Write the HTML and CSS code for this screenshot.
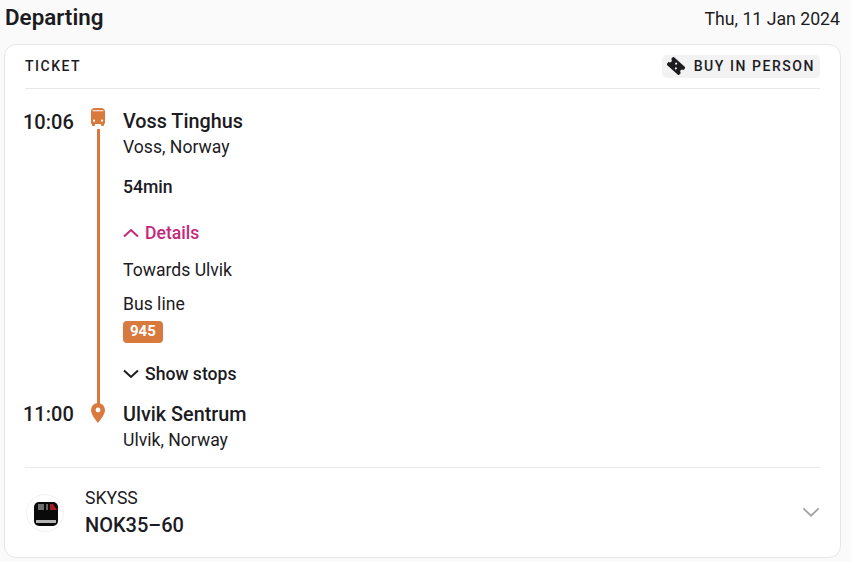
FILE: index.html
```html
<!DOCTYPE html>
<html lang="en">
<head>
    <meta charset="UTF-8">
    <meta name="viewport" content="width=device-width, initial-scale=1.0">
    <title>Departing</title>
    <link rel="stylesheet" href="styles.css">
</head>
<body>

    <div class="top-row">
        <h1>Departing</h1>
        <span class="date">Thu, 11 Jan 2024</span>
    </div>

    <div class="card">
        <!-- Ticket header -->
        <div class="ticket-row">
            <span class="ticket-label">TICKET</span>
            <span class="buy-chip">
                <svg class="ticket-icon" viewBox="0 0 24 24"><g transform="rotate(42 12 12)"><path d="M1 5h22v4.500a2.500 2.500 0 0 0 0 5V19H1v-4.500a2.500 2.500 0 0 0 0-5z"/><circle cx="10" cy="9.500" r="1.400" fill="#f2f2f2"/><circle cx="14" cy="14.500" r="1.400" fill="#f2f2f2"/></g></svg>
                BUY IN PERSON
            </span>
        </div>

        <!-- Journey leg -->
        <div class="leg">
            <div class="times">
                <span>10:06</span>
                <span>11:00</span>
            </div>
            <div class="rail">
                <svg class="bus-icon" viewBox="0 0 14 18"><path d="M4 0h6c2.500 0 4 1.200 4 3.500V15a1 1 0 0 1-1 1v1a1 1 0 0 1-1 1h-1a1 1 0 0 1-1-1v-1H4v1a1 1 0 0 1-1 1H2a1 1 0 0 1-1-1v-1a1 1 0 0 1-1-1V3.500C0 1.200 1.500 0 4 0z"/><rect x="1.500" y="2.200" width="11" height="1.100" rx="0.500" fill="#fff"/><circle cx="3" cy="12.700" r="1.100" fill="#fff"/><circle cx="11" cy="12.700" r="1.100" fill="#fff"/></svg>
                <div class="rail-line"></div>
                <svg class="pin-icon" viewBox="0 0 14 20"><path fill-rule="evenodd" d="M7 0a7 7 0 0 1 7 7c0 4.500-4 9-7 13C4 16 0 11.500 0 7a7 7 0 0 1 7-7zm0 4.600a2.400 2.400 0 1 0 0 4.800 2.400 2.400 0 0 0 0-4.800z"/></svg>
            </div>
            <div class="stops">
                <div class="stop-name">Voss Tinghus</div>
                <div class="stop-place">Voss, Norway</div>
                <div class="duration">54min</div>
                <div class="toggle details">
                    <svg class="chevron" viewBox="0 0 16 10"><path d="M1 8.500 8 2l7 6.500"/></svg>
                    Details
                </div>
                <div class="info towards">Towards Ulvik</div>
                <div class="info bus-line">Bus line</div>
                <div class="badge">945</div>
                <div class="toggle show-stops">
                    <svg class="chevron" viewBox="0 0 16 10"><path d="M1 1.500 8 8l7-6.500"/></svg>
                    Show stops
                </div>
                <div class="stop-name">Ulvik Sentrum</div>
                <div class="stop-place">Ulvik, Norway</div>
            </div>
        </div>

        <!-- Operator and price -->
        <div class="operator">
            <div class="logo-ring">
                <svg class="logo" viewBox="0 0 24 24">
                    <rect width="24" height="24" rx="5" fill="#0a0a0a"/>
                    <rect x="4" y="2" width="6" height="6" fill="#6e6e6e"/>
                    <rect x="12" y="2" width="2" height="6" fill="#666"/>
                    <path d="M16 2h3l4 6h-7z" fill="#a51c26"/>
                    <rect x="2" y="18" width="20" height="3" fill="#b5b5b5"/>
                </svg>
            </div>
            <div class="operator-text">
                <div class="operator-name">SKYSS</div>
                <div class="price">NOK35–60</div>
            </div>
            <svg class="expand" viewBox="0 0 20 12"><path d="M1.500 1.500 10 9.500l8.500-8"/></svg>
        </div>
    </div>

</body>
</html>
```

FILE: styles.css
```css
body {
    margin: 0;
    padding: 0 10px 0 4px;
    font-family: Roboto, "Liberation Sans", sans-serif;
    background-color: #fafafa;
    color: #1c1b1f;
}
.top-row {
    display: flex;
    justify-content: space-between;
    align-items: center;
    height: 35px;
    padding: 0 1px;
}
h1 {
    margin: -2px 0 0;
    font-size: 22.4px;
    font-weight: 600;
}
.date {
    font-size: 17.7px;
    padding-top: 2px;
}
.card {
    margin-top: 9px;
    padding: 0 20px;
    height: 514px;
    box-sizing: border-box;
    background-color: #fff;
    border: 1px solid #e6e6e6;
    border-radius: 12px;
}
.ticket-row {
    display: flex;
    justify-content: space-between;
    align-items: center;
    height: 43px;
    border-bottom: 1px solid #e8e8e8;
}
.ticket-label {
    font-size: 14px;
    font-weight: 500;
    letter-spacing: 1.5px;
    margin-top: -1px;
}
.buy-chip {
    display: flex;
    align-items: center;
    height: 23px;
    box-sizing: border-box;
    padding: 0 5px 2px 5px;
    gap: 9px;
    font-size: 14px;
    font-weight: 500;
    letter-spacing: 1.55px;
    background-color: #f2f2f2;
    border-radius: 5px;
}
.ticket-icon {
    width: 18px;
    height: 18px;
    fill: #1c1b1f;
}
.leg {
    display: flex;
    padding-top: 19px;
}
.times {
    width: 59px;
    margin-left: -2px;
    display: flex;
    flex-direction: column;
    justify-content: space-between;
    height: 318px;
    font-size: 20px;
    font-weight: 500;
    padding-top: 2px;
    box-sizing: border-box;
}
.rail {
    width: 32px;
    height: 315px;
    display: flex;
    flex-direction: column;
    align-items: center;
}
.bus-icon {
    width: 14px;
    height: 18px;
    fill: #d9793d;
}
.rail-line {
    flex: 1;
    width: 3px;
    margin-top: 3px;
    background-color: #d9793d;
}
.pin-icon {
    width: 14px;
    height: 20px;
    margin-top: -1px;
    fill: #d9793d;
    flex-shrink: 0;
}
.stops {
    margin-left: 9px;
}
.stop-name {
    font-size: 19.8px;
    font-weight: 500;
    line-height: 28px;
    margin-bottom: -2px;
}
.stop-place {
    font-size: 17.6px;
    line-height: 26px;
}
.duration {
    margin-top: 14px;
    font-size: 17.6px;
    font-weight: 500;
    line-height: 26px;
}
.toggle {
    display: flex;
    align-items: center;
    gap: 6px;
    font-size: 17.6px;
    font-weight: 500;
    line-height: 26px;
}
.details {
    margin-top: 20px;
    color: #c4277b;
}
.chevron {
    width: 16px;
    height: 10px;
    fill: none;
    stroke: currentColor;
    stroke-width: 2;
}
.info {
    font-size: 17.6px;
    line-height: 26px;
}
.towards {
    margin-top: 11px;
}
.bus-line {
    margin-top: 8px;
}
.badge {
    display: inline-block;
    margin-top: 4px;
    padding: 0 7px;
    height: 22px;
    line-height: 21px;
    font-size: 15px;
    font-weight: 700;
    color: #fff;
    background-color: #d9793d;
    border-radius: 4px;
}
.show-stops {
    margin-top: 18px;
    margin-bottom: 14px;
}
.operator {
    display: flex;
    align-items: center;
    margin-top: 14px;
    height: 90px;
    border-top: 1px solid #e8e8e8;
}
.logo-ring {
    width: 38px;
    height: 38px;
    margin-left: 1px;
    margin-top: -1px;
    display: flex;
    align-items: center;
    justify-content: center;
    border: 1px solid #f2f2f2;
    border-radius: 50%;
    box-sizing: border-box;
}
.logo {
    width: 24px;
    height: 24px;
    margin: 2px 0 0 2px;
    filter: blur(0.6px);
}
.operator-text {
    flex: 1;
    margin-left: 21px;
    padding-top: 1px;
}
.operator-name {
    font-size: 17.6px;
    line-height: 22px;
}
.price {
    margin-top: 1px;
    font-size: 20px;
    font-weight: 500;
    line-height: 30px;
}
.expand {
    width: 18px;
    height: 11px;
    margin-top: -1px;
    fill: none;
    stroke: #a3a3a3;
    stroke-width: 2;
}
```
